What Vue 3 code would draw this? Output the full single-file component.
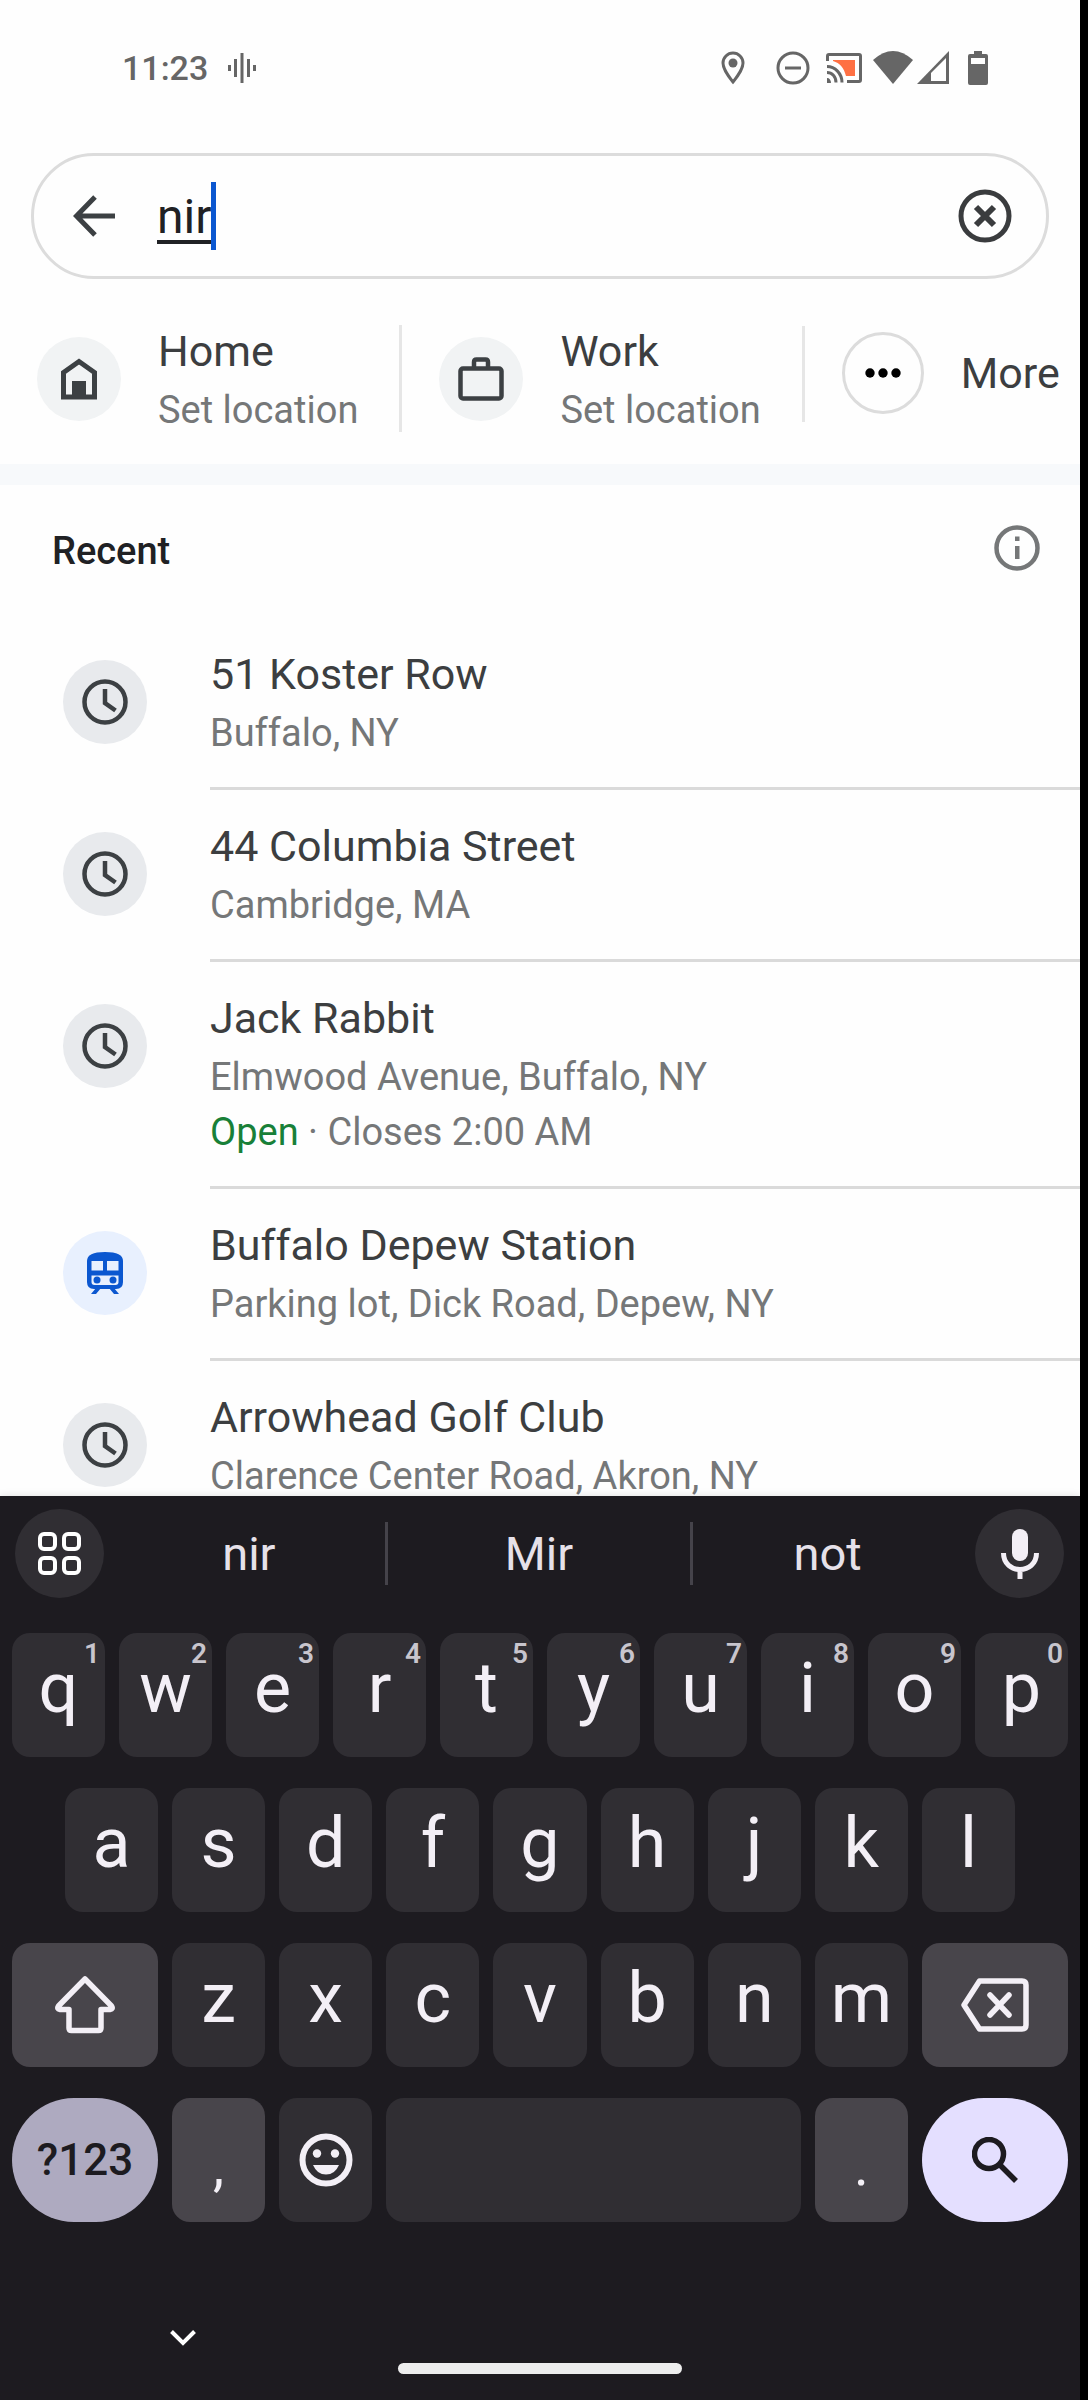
<script setup>
import { ref } from 'vue'

const query = ref('nir')

const recents = [
  { title: '51 Koster Row', place: 'Buffalo, NY' },
  { title: '44 Columbia Street', place: 'Cambridge, MA' },
  { title: 'Jack Rabbit', place: 'Elmwood Avenue, Buffalo, NY', status: 'Open', hours: 'Closes 2:00 AM' },
  { title: 'Buffalo Depew Station', place: 'Parking lot, Dick Road, Depew, NY', transit: true },
  { title: 'Arrowhead Golf Club', place: 'Clarence Center Road, Akron, NY' },
]

const suggestions = ['nir', 'Mir', 'not']
const topRow = [...'qwertyuiop'].map((letter, i) => ({ letter, digit: (i + 1) % 10 }))
const middleRow = [...'asdfghjkl']
const bottomRow = [...'zxcvbnm']
</script>

<template>
  <div class="device">
    <div class="screen">
      <header class="status">
        <span class="time">11:23</span>
        <svg class="voice" width="28" height="30" viewBox="0 0 28 30" fill="#666">
          <path d="M0 12h3v6H0zM6 6h3v18H6zM12.500 0h3v30h-3zM19 6h3v18h-3zM25 12h3v6h-3z" />
        </svg>
        <div class="status-icons">
          <svg width="24" height="34" viewBox="0 0 24 34">
            <path d="M12 2C6.500 2 2 6.500 2 12c0 7 10 19 10 19s10-12 10-19c0-5.500-4.500-10-10-10z" fill="none" stroke="#666" stroke-width="3" />
            <circle cx="12" cy="12" r="4.500" fill="#666" />
          </svg>
          <svg class="dnd" width="34" height="34" viewBox="0 0 34 34" fill="none" stroke="#666" stroke-width="3">
            <circle cx="17" cy="17" r="15" /><path d="M9 17h16" />
          </svg>
          <svg class="cast" width="36" height="30" viewBox="0 0 36 30" fill="none" stroke="#666" stroke-width="3">
            <path d="M7 7h22v16h-9C18 15 14 10 7 8z" fill="#ff7043" stroke="none" />
            <path d="M1.500 8V3q0-1.500 1.500-1.500h30q1.500 0 1.500 1.500v24q0 1.500-1.500 1.500H21" />
            <path d="M1 13.500c8 0 15 7 15 16M1 19.500c5 0 9 4 9 10" />
            <path d="M1 25c2.500 0 4 2 4 5H1z" fill="#666" stroke="none" />
          </svg>
          <svg class="wifi" width="40" height="33" viewBox="0 0 40 33" fill="#666">
            <path d="M20 33 0 9Q20-9 40 9z" />
          </svg>
          <svg class="signal" width="32" height="33" viewBox="0 0 32 33">
            <path d="M0 33 32 0v33z" fill="#666" /><path d="M14 22 29 7v23H14z" fill="#fefefe" />
          </svg>
          <svg class="battery" width="20" height="34" viewBox="0 0 20 34">
            <path d="M6 0h8v3h4q2 0 2 2v27q0 2-2 2H2q-2 0-2-2V5q0-2 2-2h4z" fill="#666" />
            <path d="M3 7h14v6H3z" fill="#fefefe" />
          </svg>
        </div>
      </header>

      <form class="search" role="search" @submit.prevent>
        <button type="button" aria-label="Back">
          <svg width="42" height="42" viewBox="0 0 42 42" fill="none" stroke="#3c4043" stroke-width="5">
            <path d="M42 21H4M22 2 3.500 21 22 40" />
          </svg>
        </button>
        <input v-model="query" class="query" type="text" aria-label="Search here" />
        <span class="caret"></span>
        <button type="button" class="clear" aria-label="Clear" @click="query = ''">
          <svg width="54" height="54" viewBox="0 0 54 54" fill="none" stroke="#3a3c3e">
            <circle cx="27" cy="27" r="24" stroke-width="5" />
            <path d="m18 18 18 18M36 18 18 36" stroke-width="6" />
          </svg>
        </button>
      </form>

      <nav class="shortcuts">
        <button type="button" class="shortcut">
          <span class="disc pale">
            <svg width="36" height="42" viewBox="0 0 36 42">
              <path d="M2.500 14.500 18 3.500l15.500 11v24.500h-31z" fill="none" stroke="#3c4043" stroke-width="5" />
              <path d="M11 23h14v17H11z" fill="#3c4043" />
            </svg>
          </span>
          <span class="labels"><span class="title">Home</span><span class="sub">Set location</span></span>
        </button>
        <span class="rule"></span>
        <button type="button" class="shortcut">
          <span class="disc pale">
            <svg width="46" height="44" viewBox="0 0 46 44" fill="none" stroke="#3c4043" stroke-width="4.500">
              <rect x="2.500" y="11.500" width="41" height="30" rx="2.500" />
              <path d="M16 11V5q0-2.500 2.500-2.500h9Q30 2.500 30 5v6" />
            </svg>
          </span>
          <span class="labels"><span class="title">Work</span><span class="sub">Set location</span></span>
        </button>
        <span class="rule short"></span>
        <button type="button" class="shortcut more">
          <span class="disc outlined">
            <svg width="36" height="10" viewBox="0 0 36 10">
              <circle cx="5" cy="5" r="4.700" /><circle cx="18" cy="5" r="4.700" /><circle cx="31" cy="5" r="4.700" />
            </svg>
          </span>
          <span class="title">More</span>
        </button>
      </nav>

      <main class="results">
        <div class="heading">
          <h2>Recent</h2>
          <button type="button" aria-label="About recent searches">
            <svg width="46" height="46" viewBox="0 0 46 46">
              <circle cx="23" cy="23" r="20.500" fill="none" stroke="#757778" stroke-width="4.500" />
              <path d="M21 11.500h4.500V16H21zM21 21h4.500v13H21z" fill="#757778" />
            </svg>
          </button>
        </div>
        <ul>
          <li v-for="item in recents" :key="item.title">
            <a href="#" class="recent">
              <span class="disc" :class="item.transit ? 'transit' : 'grey'">
                <svg v-if="item.transit" width="38" height="44" viewBox="0 0 38 44">
                  <path d="M1 10Q1 1 19 1t18 9v21q0 7-7 7H8q-7 0-7-7z" fill="#0b57d0" />
                  <path d="M5.500 10H17v9.500H5.500zM21 10h11.500v9.500H21zM5.500 24.500h27V31q0 3-3 3h-21q-3 0-3-3z" fill="#e8f0fe" />
                  <circle cx="11" cy="29" r="3.500" fill="#0b57d0" /><circle cx="27" cy="29" r="3.500" fill="#0b57d0" />
                  <path d="m5 43 5-6h5l-5 6zM33 43l-5-6h-5l5 6z" fill="#0b57d0" />
                </svg>
                <svg v-else width="46" height="46" viewBox="0 0 46 46" fill="none" stroke="#3c4043" stroke-width="4.500">
                  <circle cx="23" cy="23" r="20.500" /><path d="M23 10v14l10.500 7.500" />
                </svg>
              </span>
              <span class="labels body">
                <span class="title">{{ item.title }}</span>
                <span class="sub">{{ item.place }}</span>
                <span v-if="item.status" class="sub"><span class="open">{{ item.status }}</span> · {{ item.hours }}</span>
              </span>
            </a>
          </li>
        </ul>
      </main>

      <section class="keyboard" aria-label="Keyboard">
        <div class="strip">
          <button type="button" class="round" aria-label="Keyboard menu">
            <svg width="44" height="44" viewBox="0 0 44 44" fill="none" stroke="#fff" stroke-width="4">
              <rect x="2" y="2" width="15" height="15" rx="4" /><rect x="26" y="2" width="15" height="15" rx="4" />
              <rect x="2" y="26" width="15" height="15" rx="4" /><rect x="26" y="26" width="15" height="15" rx="4" />
            </svg>
          </button>
          <div class="words">
            <button v-for="word in suggestions" :key="word" type="button" class="word">{{ word }}</button>
          </div>
          <button type="button" class="round" aria-label="Voice typing">
            <svg width="38" height="52" viewBox="0 0 38 52">
              <rect x="11" y="1" width="16" height="32" rx="8" fill="#f3eff6" />
              <path d="M2.500 25c0 22 33 22 33 0M19 41v10" fill="none" stroke="#f3eff6" stroke-width="5" />
            </svg>
          </button>
        </div>

        <div class="rows">
          <div class="row">
            <button v-for="k in topRow" :key="k.letter" type="button" class="key">
              {{ k.letter }}<span class="hint">{{ k.digit }}</span>
            </button>
          </div>
          <div class="row inset">
            <button v-for="k in middleRow" :key="k" type="button" class="key">{{ k }}</button>
          </div>
          <div class="row">
            <button type="button" class="key wide light" aria-label="Shift">
              <svg width="60" height="60" viewBox="0 0 60 60" fill="none" stroke="#f3eff6" stroke-width="5.500" stroke-linejoin="round">
                <path d="M30 4 56.500 31q2 3-1.500 3.500H46V53q0 2.500-2.500 2.500h-27Q14 55.500 14 53V34.500H5Q1.500 34 3.500 31z" />
              </svg>
            </button>
            <button v-for="k in bottomRow" :key="k" type="button" class="key">{{ k }}</button>
            <button type="button" class="key wide light" aria-label="Backspace">
              <svg width="68" height="54" viewBox="0 0 68 54" fill="none" stroke="#f3eff6" stroke-width="5.500" stroke-linejoin="round">
                <path d="M3 27 18.500 3H61q4 0 4 4v40q0 4-4 4H18.500z" />
                <path d="m29 17 19 20M48 17 29 37" stroke-linecap="round" />
              </svg>
            </button>
          </div>
          <div class="row bottom">
            <button type="button" class="key symbols">?123</button>
            <button type="button" class="key light low">,</button>
            <button type="button" class="key centred" aria-label="Emoji">
              <svg width="54" height="54" viewBox="0 0 54 54" fill="#f3eff6">
                <circle cx="27" cy="27" r="23.500" fill="none" stroke="#f3eff6" stroke-width="6" />
                <circle cx="18" cy="20.500" r="4.200" /><circle cx="36" cy="20.500" r="4.200" />
                <path d="M14 32h26q-4 9.500-13 9.500T14 32z" />
              </svg>
            </button>
            <button type="button" class="key" aria-label="Space"></button>
            <button type="button" class="key light low">.</button>
            <button type="button" class="key go" aria-label="Search">
              <svg width="46" height="46" viewBox="0 0 46 46" fill="none" stroke="#1d1b20" stroke-width="5.500">
                <circle cx="17" cy="17" r="14.500" /><path d="m28 28 16 16" />
              </svg>
            </button>
          </div>
        </div>

        <footer class="gestures">
          <button type="button" class="hide" aria-label="Hide keyboard">
            <svg width="26" height="16" viewBox="0 0 26 16" fill="none" stroke="#fff" stroke-width="4">
              <path d="M1.500 1.500 13 13 24.500 1.500" />
            </svg>
          </button>
          <span class="handle"></span>
        </footer>
      </section>
    </div>
  </div>
</template>

<style>
body {
  margin: 0;
  background: #000;
}
</style>

<style scoped>
* {
  box-sizing: border-box;
}

svg {
  display: block;
  flex: none;
}

button,
input {
  margin: 0;
  padding: 0;
  border: 0;
  background: none;
  color: inherit;
  font: inherit;
}

.device {
  height: 100vh;
  padding-right: 8px;
  background: #000;
  font-family: Roboto, "Liberation Sans", sans-serif;
}

.screen {
  display: flex;
  flex-direction: column;
  height: 100%;
  overflow: hidden;
  background: #fefefe;
}

.status {
  display: flex;
  flex: none;
  align-items: center;
  height: 135px;
  padding: 0 92px 0 122px;
  color: #666;
}

.time {
  font-size: 34px;
  font-weight: 500;
}

.voice {
  margin-left: 20px;
}

.status-icons {
  display: flex;
  align-items: center;
  margin-left: auto;
}

.dnd {
  margin-left: 31px;
}

.cast {
  margin-left: 16px;
}

.wifi {
  margin-left: 11px;
}

.signal {
  margin-left: 4px;
}

.battery {
  margin-left: 19px;
}

.search {
  display: flex;
  flex: none;
  align-items: center;
  height: 126px;
  margin: 18px 31px 0;
  padding: 0 34px 0 39px;
  border: 3px solid #dcdcdc;
  border-radius: 63px;
}

.query {
  field-sizing: content;
  margin-left: 42px;
  outline: 0;
  color: #202124;
  font-size: 48px;
  text-decoration: underline;
  text-decoration-thickness: 4px;
  text-underline-offset: 7px;
}

.caret {
  width: 5px;
  height: 68px;
  background: #0b57d0;
}

.clear {
  margin-left: auto;
}

.shortcuts {
  display: flex;
  flex: none;
  align-items: center;
  padding: 40px 0 26px 37px;
}

.shortcut {
  display: flex;
  align-items: center;
  gap: 37px;
  text-align: left;
}

.more {
  align-self: flex-start;
  height: 108px;
}

.rule {
  flex: none;
  width: 3px;
  height: 107px;
  margin: 0 37px 0 41px;
  background: #e6e6e6;
}

.short {
  align-self: flex-start;
  height: 96px;
  margin-top: 7px;
}

.disc {
  display: flex;
  flex: none;
  align-items: center;
  justify-content: center;
  width: 84px;
  height: 84px;
  border-radius: 50%;
}

.pale {
  background: #f1f3f4;
}

.grey {
  background: #e8eaed;
}

.transit {
  background: #e8f0fe;
}

.outlined {
  width: 82px;
  height: 82px;
  border: 3px solid #dcdcdc;
}

.labels {
  display: flex;
  flex-direction: column;
}

.title {
  color: #3c3e40;
  font-size: 43px;
  line-height: 64px;
  white-space: nowrap;
}

.sub {
  color: #757778;
  font-size: 38px;
  line-height: 55px;
  white-space: nowrap;
}

.open {
  color: #188038;
}

.results {
  flex: 1;
  min-height: 0;
  overflow: hidden;
  border-top: 21px solid #f7f9fb;
}

.heading {
  display: flex;
  align-items: center;
  justify-content: space-between;
  height: 126px;
  padding: 0 40px 0 52px;
}

h2 {
  margin: 0;
  padding-top: 5px;
  color: #202124;
  font-size: 38px;
  font-weight: 500;
}

ul {
  margin: 0;
  padding: 7px 0 0;
  list-style: none;
}

.recent {
  display: flex;
  align-items: flex-start;
  gap: 63px;
  padding-left: 63px;
  text-decoration: none;
}

.recent .disc {
  margin-top: 42px;
}

.body {
  flex: 1;
  padding: 24px 0 26px;
  border-bottom: 3px solid #dadada;
}

.keyboard {
  flex: none;
  background: #1d1b20;
  box-shadow: 0 0 8px rgba(0, 0, 0, 0.12);
  color: #f3eff6;
}

.strip {
  display: flex;
  align-items: center;
  gap: 9px;
  padding: 13px 16px 35px 15px;
}

.round {
  display: flex;
  flex: none;
  align-items: center;
  justify-content: center;
  width: 89px;
  height: 89px;
  border-radius: 50%;
  background: #302e33;
}

.words {
  display: grid;
  flex: 1;
  grid-template-columns: 8fr 9fr 8fr;
  padding-right: 4px;
}

.word {
  height: 63px;
  color: #e6e1e9;
  font-size: 47px;
  line-height: 60px;
}

.word + .word {
  border-left: 3px solid #45434a;
}

.rows {
  display: flex;
  flex-direction: column;
  gap: 31px;
  padding: 0 12px;
}

.row {
  display: flex;
  gap: 14px;
}

.inset {
  padding: 0 53px;
}

.bottom {
  display: grid;
  grid-template-columns: 146px minmax(0, 93fr) minmax(0, 93fr) minmax(0, 415fr) minmax(0, 93fr) 146px;
}

.key {
  position: relative;
  display: flex;
  flex: 1 1 0;
  align-items: center;
  justify-content: center;
  min-width: 0;
  height: 124px;
  padding-bottom: 14px;
  border-radius: 18px;
  background: #302e33;
  font-size: 70px;
  line-height: 80px;
}

.hint {
  position: absolute;
  top: 4px;
  right: 5px;
  color: #c8c5cd;
  font-size: 28px;
  font-weight: 600;
  line-height: 34px;
}

.wide {
  flex: none;
  width: 146px;
  padding-bottom: 0;
}

.light {
  background: #48454b;
}

.low {
  padding: 12px 0 0;
  font-size: 56px;
}

.centred {
  padding-bottom: 0;
}

.symbols,
.go {
  padding-bottom: 0;
  border-radius: 62px;
  color: #1d1b20;
}

.symbols {
  background: #aeaac0;
  font-size: 44px;
  font-weight: 500;
}

.go {
  background: #e4dfff;
}

.gestures {
  display: flex;
  flex-direction: column;
  align-items: center;
  gap: 17px;
  padding: 108px 0 26px;
}

.hide {
  align-self: flex-start;
  margin-left: 170px;
}

.handle {
  width: 284px;
  height: 11px;
  border-radius: 6px;
  background: #ededed;
}
</style>
